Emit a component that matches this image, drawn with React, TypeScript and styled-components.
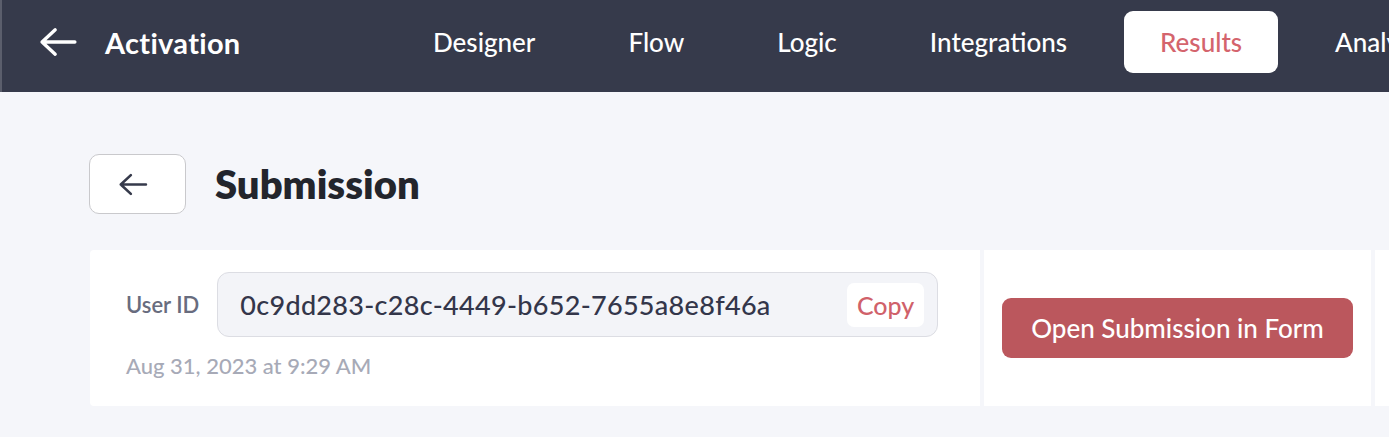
import styled, { createGlobalStyle } from "styled-components";

const GlobalStyle = createGlobalStyle`
  html, body {
    margin: 0;
    padding: 0;
    background: #f5f6fa;
    font-family: "Lato", "Noto Sans", sans-serif;
  }
  * {
    box-sizing: border-box;
  }
`;

const Page = styled.div`
  width: 1389px;
  height: 437px;
  overflow: hidden;
  background: #f5f6fa;
`;

const TopBar = styled.header`
  display: flex;
  align-items: center;
  height: 92px;
  padding: 0 0 8px 37px;
  background: #363a4b;
  border-left: 2px solid #5b5e6c;
  white-space: nowrap;
`;

const BrandBox = styled.div`
  display: flex;
  align-items: center;
  gap: 28px;
  width: 358px;
  flex-shrink: 0;
`;

const IconButton = styled.button`
  display: flex;
  align-items: center;
  justify-content: center;
  padding: 0;
  border: none;
  background: transparent;
  cursor: pointer;
`;

const BrandTitle = styled.div`
  color: #fff;
  font-size: 29px;
  font-weight: 700;
  letter-spacing: 0.3px;
`;

const NavList = styled.nav`
  display: flex;
  align-items: center;
  gap: 21px;
`;

const NavItem = styled.div<{ $active?: boolean }>`
  display: flex;
  align-items: center;
  height: 62px;
  padding: 0 36px;
  border-radius: 9px;
  font-size: 26px;
  font-weight: 500;
  color: ${({ $active }) => ($active ? "#d4646d" : "#fff")};
  background: ${({ $active }) => ($active ? "#fff" : "transparent")};
`;

const Content = styled.main`
  padding: 62px 0 0 89px;
`;

const TitleRow = styled.div`
  display: flex;
  align-items: center;
  gap: 29px;
  height: 60px;
`;

const BackButton = styled.button`
  display: flex;
  align-items: center;
  justify-content: center;
  width: 97px;
  height: 60px;
  padding: 0 10px 0 0;
  border: 1.5px solid #c9c9cc;
  border-radius: 10px;
  background: #fff;
  cursor: pointer;
`;

const PageTitle = styled.h1`
  margin: 0;
  font-size: 40px;
  font-weight: 800;
  color: #23252c;
`;

const CardRow = styled.div`
  display: flex;
  gap: 4px;
  margin-top: 36px;
  margin-left: 1px;
`;

const Card = styled.section<{ $width?: number }>`
  flex-shrink: 0;
  width: ${({ $width }) => ($width ? `${$width}px` : "auto")};
  flex-grow: ${({ $width }) => ($width ? 0 : 1)};
  height: 156px;
  background: #fff;
`;

const InfoCard = styled(Card)`
  display: flex;
  flex-direction: column;
  padding: 22px 0 0 36px;
  border-radius: 4px 0 0 4px;
`;

const IdRow = styled.div`
  display: flex;
  align-items: center;
  gap: 18px;
`;

const FieldLabel = styled.span`
  font-size: 22px;
  font-weight: 600;
  color: #686c7e;
`;

const IdField = styled.div`
  display: flex;
  align-items: center;
  justify-content: space-between;
  width: 721px;
  height: 65px;
  padding: 0 13px 0 22px;
  background: #f3f4f8;
  border: 1px solid #dcdde3;
  border-radius: 12px;
`;

const IdText = styled.span`
  font-size: 27px;
  font-weight: 500;
  color: #33364a;
  letter-spacing: 0.3px;
`;

const CopyButton = styled.button`
  height: 44px;
  padding: 0 10px;
  border: none;
  border-radius: 7px;
  background: #fff;
  font-family: inherit;
  font-size: 25px;
  font-weight: 500;
  color: #d0616a;
  cursor: pointer;
`;

const DateText = styled.div`
  margin-top: 15px;
  font-size: 22px;
  font-weight: 500;
  color: #a7aab7;
`;

const ActionCard = styled(Card)`
  display: flex;
  align-items: center;
  padding: 0 18px;
`;

const PrimaryButton = styled.button`
  width: 351px;
  height: 60px;
  border: none;
  border-radius: 9px;
  background: #bb575d;
  font-family: inherit;
  font-size: 26px;
  font-weight: 500;
  color: #fff;
  cursor: pointer;
`;

const navItems = ["Designer", "Flow", "Logic", "Integrations", "Results", "Analytics"];

const ArrowLeft = ({ w, h, stroke, width }: { w: number; h: number; stroke: string; width: number }) => (
  <svg width={w} height={h} viewBox="0 0 40 32" fill="none">
    <path
      d="M38 16H3M17 3L3 16l14 13"
      stroke={stroke}
      strokeWidth={width}
      strokeLinecap="round"
      strokeLinejoin="round"
    />
  </svg>
);

export default function App() {
  return (
    <Page>
      <GlobalStyle />
      <TopBar>
        <BrandBox>
          <IconButton aria-label="Back">
            <ArrowLeft w={38} h={30} stroke="#fff" width={3.6} />
          </IconButton>
          <BrandTitle>Activation</BrandTitle>
        </BrandBox>
        <NavList>
          {navItems.map((item) => (
            <NavItem key={item} $active={item === "Results"}>
              {item}
            </NavItem>
          ))}
        </NavList>
      </TopBar>
      <Content>
        <TitleRow>
          <BackButton aria-label="Back">
            <ArrowLeft w={30} h={23} stroke="#363a4b" width={3.6} />
          </BackButton>
          <PageTitle>Submission</PageTitle>
        </TitleRow>
        <CardRow>
          <InfoCard $width={890}>
            <IdRow>
              <FieldLabel>User ID</FieldLabel>
              <IdField>
                <IdText>0c9dd283-c28c-4449-b652-7655a8e8f46a</IdText>
                <CopyButton>Copy</CopyButton>
              </IdField>
            </IdRow>
            <DateText>Aug 31, 2023 at 9:29 AM</DateText>
          </InfoCard>
          <ActionCard $width={387}>
            <PrimaryButton>Open Submission in Form</PrimaryButton>
          </ActionCard>
          <Card />
        </CardRow>
      </Content>
    </Page>
  );
}
